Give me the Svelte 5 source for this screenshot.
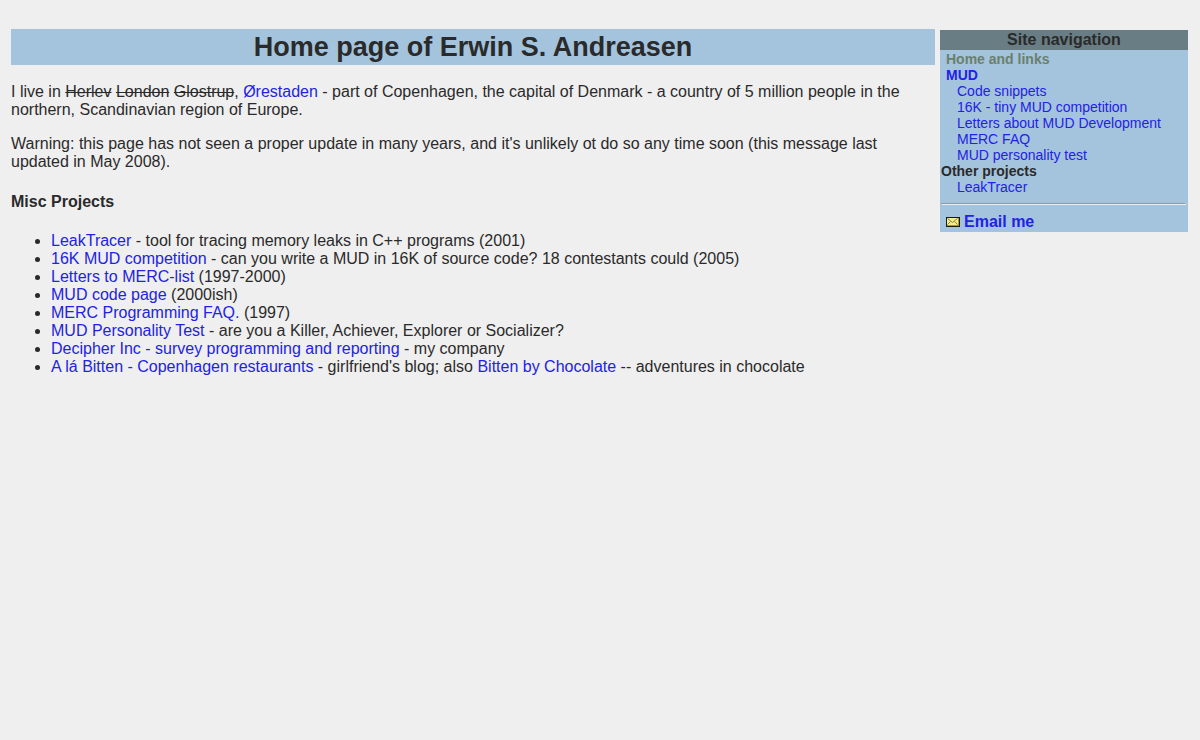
<script lang="ts">
  type NavItem = { label: string; href?: string; kind: "top" | "heading" | "sub" | "current" };

  const nav: NavItem[] = [
    { label: "Home and links", kind: "current" },
    { label: "MUD", href: "#mud", kind: "top" },
    { label: "Code snippets", href: "#snippets", kind: "sub" },
    { label: "16K - tiny MUD competition", href: "#16k", kind: "sub" },
    { label: "Letters about MUD Development", href: "#letters", kind: "sub" },
    { label: "MERC FAQ", href: "#faq", kind: "sub" },
    { label: "MUD personality test", href: "#personality", kind: "sub" },
    { label: "Other projects", kind: "heading" },
    { label: "LeakTracer", href: "#leaktracer", kind: "sub" },
  ];
</script>

<div class="page">
  <main>
    <h1>Home page of Erwin S. Andreasen</h1>
    <p>
      I live in <s>Herlev</s> <s>London</s> <s>Glostrup</s>, <a href="#orestaden">Ørestaden</a> - part of
      Copenhagen, the capital of Denmark - a country of 5 million people in the northern, Scandinavian
      region of Europe.
    </p>
    <p>
      Warning: this page has not seen a proper update in many years, and it's unlikely ot do so any time
      soon (this message last updated in May 2008).
    </p>
    <h2>Misc Projects</h2>
    <ul class="projects">
      <li><a href="#leaktracer">LeakTracer</a> - tool for tracing memory leaks in C++ programs (2001)</li>
      <li><a href="#16k">16K MUD competition</a> - can you write a MUD in 16K of source code? 18 contestants could (2005)</li>
      <li><a href="#letters">Letters to MERC-list</a> (1997-2000)</li>
      <li><a href="#snippets">MUD code page</a> (2000ish)</li>
      <li><a href="#faq">MERC Programming FAQ.</a> (1997)</li>
      <li><a href="#personality">MUD Personality Test</a> - are you a Killer, Achiever, Explorer or Socializer?</li>
      <li><a href="#decipher">Decipher Inc - survey programming and reporting</a> - my company</li>
      <li><a href="#bitten">A lá Bitten - Copenhagen restaurants</a> - girlfriend's blog; also <a href="#chocolate">Bitten by Chocolate</a> -- adventures in chocolate</li>
    </ul>
  </main>

  <nav aria-labelledby="nav-title">
    <div class="title" id="nav-title">Site navigation</div>
    <ul>
      {#each nav as item}
        <li class={item.kind}>
          {#if item.href}
            <a href={item.href}>{item.label}</a>
          {:else}
            {item.label}
          {/if}
        </li>
      {/each}
    </ul>
    <hr />
    <a class="email" href="#email">
      <svg width="14" height="10" viewBox="0 0 14 10" aria-hidden="true">
        <rect width="14" height="10" fill="#1c1c14" />
        <rect x="1" y="1" width="11" height="7" fill="#f4ee88" />
        <path d="M12 1h1v8h-12v-1h11z" fill="#a09a3c" />
        <path d="M1.500 1.500l5 4l5 -4M1.500 7.500l3 -3M11.500 7.500l-3 -3" fill="none" stroke="#6c6828" stroke-width=".8" />
      </svg>
      Email me
    </a>
  </nav>
</div>

<style>
  :global(body) {
    margin: 0;
    background: #efefef;
  }
  .page {
    display: flex;
    align-items: flex-start;
    gap: 5px;
    padding: 29px 12px 0 11px;
    font: 16px/18px "Liberation Sans", Arial, sans-serif;
    color: #2a2a2a;
  }
  main {
    flex: 1;
    min-width: 0;
  }
  h1 {
    margin: 0 0 18px;
    background: #a4c3dd;
    font-size: 27px;
    line-height: 36px;
    text-align: center;
  }
  h2 {
    margin: 22px 0 21px;
    font-size: 16px;
    line-height: 18px;
  }
  p {
    margin: 0 0 16px;
  }
  a {
    color: #2222e6;
    text-decoration: none;
  }
  a:hover {
    text-decoration: underline;
  }
  .projects {
    margin: 0;
    padding-left: 40px;
  }
  nav {
    flex: 0 0 248px;
    margin-top: 1px;
    background: #a4c3dd;
  }
  .title {
    background: #687d84;
    font-weight: bold;
    line-height: 20px;
    text-align: center;
  }
  nav ul {
    list-style: none;
    margin: 0;
    padding: 1px 0 0 1px;
    font-size: 14px;
    line-height: 16px;
  }
  .top,
  .current {
    padding-left: 5px;
    font-weight: bold;
  }
  .current {
    color: #6a806c;
  }
  .heading {
    font-weight: bold;
  }
  .sub {
    padding-left: 16px;
  }
  hr {
    margin: 8px 2px 8px 1px;
    border: 1px solid;
    border-color: #8a9aa6 #eee #eee #8a9aa6;
  }
  .email {
    display: flex;
    align-items: center;
    gap: 4px;
    padding: 0 0 1px 6px;
    font-weight: bold;
  }
</style>
